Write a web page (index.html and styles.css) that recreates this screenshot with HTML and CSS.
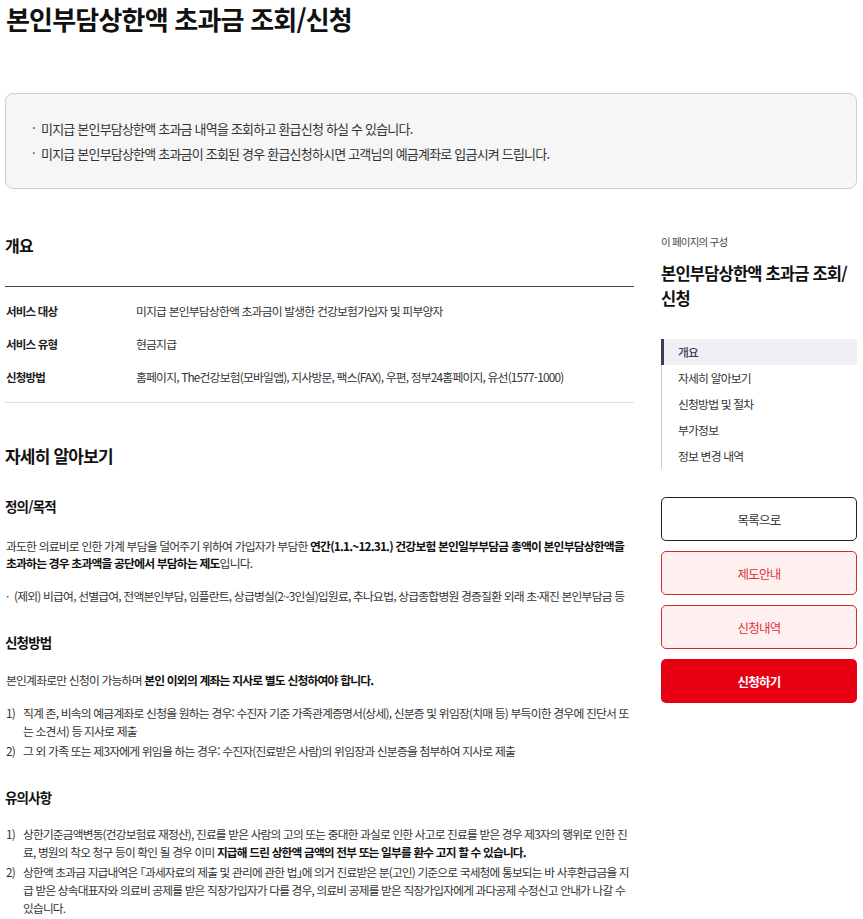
FILE: index.html
```html
<!DOCTYPE html>
<html lang="ko">
<head>
<meta charset="utf-8">
<title>본인부담상한액 초과금 조회/신청</title>
<link rel="stylesheet" href="styles.css">
</head>
<body>
<div class="page">
  <h1 class="page-title">본인부담상한액 초과금 조회/신청</h1>

  <div class="notice">
    <ul class="notice-list">
      <li>미지급 본인부담상한액 초과금 내역을 조회하고 환급신청 하실 수 있습니다.</li>
      <li>미지급 본인부담상한액 초과금이 조회된 경우 환급신청하시면 고객님의 예금계좌로 입금시켜 드립니다.</li>
    </ul>
  </div>

  <div class="layout">
    <main class="content">
      <section class="overview">
        <h2 class="section-title small">개요</h2>
        <dl class="summary">
          <div class="summary-row"><dt>서비스 대상</dt><dd>미지급 본인부담상한액 초과금이 발생한 건강보험가입자 및 피부양자</dd></div>
          <div class="summary-row"><dt>서비스 유형</dt><dd>현금지급</dd></div>
          <div class="summary-row"><dt>신청방법</dt><dd>홈페이지, The건강보험(모바일앱), 지사방문, 팩스(FAX), 우편, 정부24홈페이지, 유선(1577-1000)</dd></div>
        </dl>
      </section>

      <section class="detail">
        <h2 class="section-title">자세히 알아보기</h2>

        <h3 class="sub-title first">정의/목적</h3>
        <p class="text first-text">과도한 의료비로 인한 가계 부담을 덜어주기 위하여 가입자가 부담한 <strong>연간(1.1.~12.31.) 건강보험 본인일부부담금 총액이 본인부담상한액을 초과하는 경우 초과액을 공단에서 부담하는 제도</strong>입니다.</p>
        <ul class="dot-list">
          <li>(제외) 비급여, 선별급여, 전액본인부담, 임플란트, 상급병실(2~3인실)입원료, 추나요법, 상급종합병원 경증질환 외래 초·재진 본인부담금 등</li>
        </ul>

        <h3 class="sub-title">신청방법</h3>
        <p class="text">본인계좌로만 신청이 가능하며 <strong>본인 이외의 계좌는 지사로 별도 신청하여야 합니다.</strong></p>
        <ol class="num-list">
          <li><span class="num">1)</span><span>직계 존, 비속의 예금계좌로 신청을 원하는 경우: 수진자 기준 가족관계증명서(상세), 신분증 및 위임장(치매 등) 부득이한 경우에 진단서 또는 소견서) 등 지사로 제출</span></li>
          <li><span class="num">2)</span><span>그 외 가족 또는 제3자에게 위임을 하는 경우: 수진자(진료받은 사람)의 위임장과 신분증을 첨부하여 지사로 제출</span></li>
        </ol>

        <h3 class="sub-title tight">유의사항</h3>
        <ol class="num-list notes">
          <li><span class="num">1)</span><span>상한기준금액변동(건강보험료 재정산), 진료를 받은 사람의 고의 또는 중대한 과실로 인한 사고로 진료를 받은 경우 제3자의 행위로 인한 진료, 병원의 착오 청구 등이 확인 될 경우 이미 <strong>지급해 드린 상한액 금액의 전부 또는 일부를 환수 고지 할 수 있습니다.</strong></span></li>
          <li><span class="num">2)</span><span>상한액 초과금 지급내역은 <span class="law">「과세자료의 제출 및 관리에 관한 법」</span>에 의거 진료받은 분(고인) 기준으로 국세청에 통보되는 바 사후환급금을 지급 받은 상속대표자와 의료비 공제를 받은 직장가입자가 다를 경우, 의료비 공제를 받은 직장가입자에게 과다공제 수정신고 안내가 나갈 수 있습니다.</span></li>
        </ol>
      </section>
    </main>

    <aside class="toc">
      <p class="toc-label">이 페이지의 구성</p>
      <h2 class="toc-title">본인부담상한액 초과금 조회/<br>신청</h2>
      <ul class="toc-nav">
        <li class="active">개요</li>
        <li>자세히 알아보기</li>
        <li>신청방법 및 절차</li>
        <li>부가정보</li>
        <li>정보 변경 내역</li>
      </ul>
      <div class="actions">
        <a class="btn btn-line">목록으로</a>
        <a class="btn btn-soft">제도안내</a>
        <a class="btn btn-soft">신청내역</a>
        <a class="btn btn-primary">신청하기</a>
      </div>
    </aside>
  </div>
</div>
</body>
</html>
```

FILE: styles.css
```css
* { box-sizing: border-box; }

html, body {
  margin: 0;
  padding: 0;
  background: #fff;
}

body {
  font-family: "Noto Sans CJK KR", "Noto Sans", sans-serif;
  color: #333;
  letter-spacing: -0.05em;
}

.page {
  width: 863px;
  padding: 0 6px 0 5px;
}

.page-title {
  margin: 2px 0 0 1px;
  font-size: 26px;
  line-height: 33px;
  font-weight: 700;
  color: #111;
}

.notice {
  margin-top: 58px;
  border: 1px solid #cfcfcf;
  border-radius: 8px;
  background: #f6f6f6;
  padding: 22px 26px;
}

.notice-list {
  list-style: none;
  margin: 0;
  padding: 0;
}

.notice-list li {
  position: relative;
  padding-left: 9px;
  font-size: 13px;
  line-height: 25px;
  color: #333;
}

.notice-list li::before {
  content: "·";
  position: absolute;
  left: 0;
  top: -1px;
}

.layout {
  display: flex;
  gap: 27px;
  margin-top: 45px;
}

.content {
  width: 629px;
  flex: none;
}

.section-title {
  margin: 0;
  font-size: 17px;
  line-height: 24px;
  font-weight: 700;
  color: #111;
}

.section-title.small {
  font-size: 16px;
  line-height: 22px;
}

.summary {
  margin: 30px 0 0;
  border-top: 1px solid #444;
  border-bottom: 1px solid #ddd;
  padding: 7px 0 9px;
}

.summary-row {
  display: flex;
  height: 33px;
  align-items: center;
}

.summary-row dt {
  width: 131px;
  flex: none;
  padding-left: 1px;
  font-size: 11.5px;
  font-weight: 700;
  color: #222;
}

.summary-row dd {
  margin: 0;
  font-size: 11.8px;
  color: #333;
}

.detail {
  margin-top: 41px;
}

.sub-title {
  margin: 28px 0 0;
  font-size: 13.5px;
  line-height: 20px;
  font-weight: 700;
  color: #111;
}

.sub-title.tight {
  margin-top: 27px;
}

.text {
  margin: 19px 0 0;
  padding-left: 1px;
  font-size: 11.8px;
  line-height: 17px;
  color: #333;
}

.text.first-text {
  margin-top: 21px;
}

.text strong, .num-list strong {
  color: #111;
  font-weight: 700;
}

.dot-list {
  list-style: none;
  margin: 16px 0 0;
  padding: 0;
}

.dot-list li {
  position: relative;
  padding-left: 9px;
  font-size: 11.8px;
  line-height: 17px;
}

.dot-list li::before {
  content: "·";
  position: absolute;
  left: 1px;
  top: 0;
}

.num-list {
  list-style: none;
  margin: 16px 0 0;
  padding: 0;
}

.num-list.notes {
  margin-top: 18px;
}

.num-list li {
  display: flex;
  font-size: 11.8px;
  line-height: 18px;
  color: #333;
}

.num-list.notes li {
  font-size: 11.7px;
}

.num-list li + li {
  margin-top: 2px;
}

.num-list .num {
  width: 18px;
  flex: none;
  padding-left: 1px;
}

.law {
  font-feature-settings: "halt" 1;
}

.toc {
  width: 196px;
  flex: none;
  padding-top: 1px;
}

.toc-label {
  margin: 0;
  font-size: 10.5px;
  line-height: 14px;
  color: #444;
}

.toc-title {
  margin: 12px 0 0;
  font-size: 16.5px;
  line-height: 25px;
  font-weight: 700;
  color: #111;
}

.toc-nav {
  list-style: none;
  margin: 28px 0 0;
  padding: 0;
  border-left: 1px solid #ccc;
}

.toc-nav li {
  height: 26px;
  line-height: 26px;
  padding-left: 16px;
  font-size: 11.8px;
  color: #333;
}

.toc-nav li.active {
  background: #eff0f6;
  border-left: 3px solid #3b3d57;
  margin-left: -1px;
  padding-left: 14px;
  color: #3b3d57;
  font-weight: 500;
}

.actions {
  display: flex;
  flex-direction: column;
  gap: 10px;
  margin-top: 28px;
}

.btn {
  display: flex;
  align-items: center;
  justify-content: center;
  height: 44px;
  border-radius: 5px;
  font-size: 12.5px;
  text-decoration: none;
}

.btn-line {
  border: 1px solid #222;
  color: #333;
  background: #fff;
}

.btn-soft {
  border: 1px solid #d8262f;
  background: #fff0f0;
  color: #e0303a;
}

.btn-primary {
  background: #e60012;
  color: #fff;
  font-weight: 700;
}
```
